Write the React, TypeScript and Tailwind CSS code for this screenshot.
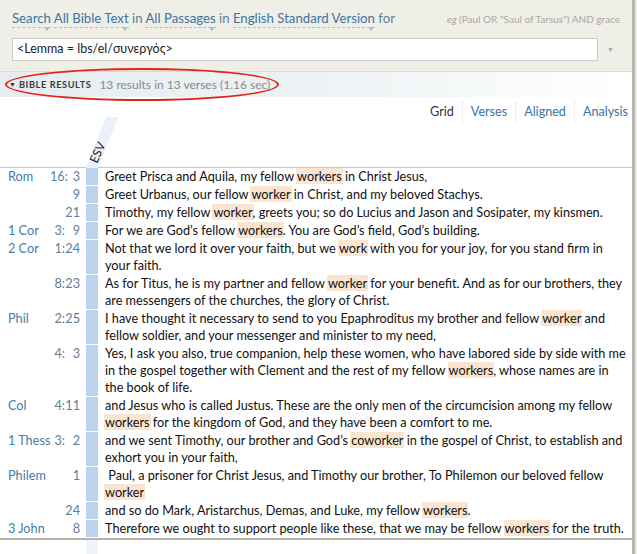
import React from 'react';

type Seg = string | { hit: string };

interface Verse {
  book?: string;
  ch?: string;
  v: string;
  lines: Seg[][];
}

const h = (t: string) => ({ hit: t });

const verses: Verse[] = [
  { book: 'Rom', ch: '16:', v: '3', lines: [['Greet Prisca and Aquila, my fellow ', h('workers'), ' in Christ Jesus,']] },
  { v: '9', lines: [['Greet Urbanus, our fellow ', h('worker'), ' in Christ, and my beloved Stachys.']] },
  { v: '21', lines: [['Timothy, my fellow ', h('worker'), ', greets you; so do Lucius and Jason and Sosipater, my kinsmen.']] },
  { book: '1 Cor', ch: '3:', v: '9', lines: [['For we are God\u2019s fellow ', h('workers'), '. You are God\u2019s field, God\u2019s building.']] },
  {
    book: '2 Cor', ch: '1:', v: '24',
    lines: [['Not that we lord it over your faith, but we ', h('work'), ' with you for your joy, for you stand firm in'], ['your faith.']],
  },
  {
    ch: '8:', v: '23',
    lines: [['As for Titus, he is my partner and fellow ', h('worker'), ' for your benefit. And as for our brothers, they'], ['are messengers of the churches, the glory of Christ.']],
  },
  {
    book: 'Phil', ch: '2:', v: '25',
    lines: [['I have thought it necessary to send to you Epaphroditus my brother and fellow ', h('worker'), ' and'], ['fellow soldier, and your messenger and minister to my need,']],
  },
  {
    ch: '4:', v: '3',
    lines: [
      ['Yes, I ask you also, true companion, help these women, who have labored side by side with me'],
      ['in the gospel together with Clement and the rest of my fellow ', h('workers'), ', whose names are in'],
      ['the book of life.'],
    ],
  },
  {
    book: 'Col', ch: '4:', v: '11',
    lines: [['and Jesus who is called Justus. These are the only men of the circumcision among my fellow'], [h('workers'), ' for the kingdom of God, and they have been a comfort to me.']],
  },
  {
    book: '1 Thess', ch: '3:', v: '2',
    lines: [['and we sent Timothy, our brother and God\u2019s ', h('coworker'), ' in the gospel of Christ, to establish and'], ['exhort you in your faith,']],
  },
  {
    book: 'Philem', v: '1',
    lines: [['\u00a0Paul, a prisoner for Christ Jesus, and Timothy our brother, To Philemon our beloved fellow'], [h('worker')]],
  },
  { v: '24', lines: [['and so do Mark, Aristarchus, Demas, and Luke, my fellow ', h('workers'), '.']] },
  { book: '3 John', v: '8', lines: [['Therefore we ought to support people like these, that we may be fellow ', h('workers'), ' for the truth.']] },
];

const font = { fontFamily: 'Lato, "Noto Sans", sans-serif' };

const DropLink: React.FC<{ children: React.ReactNode }> = ({ children }) => (
  <span className="relative text-[#3d74a3] border-b border-dashed border-[#a9c0d4] pb-[1px]">
    {children}
    <span className="absolute right-[1px] -bottom-[5px] text-[6px] leading-none text-[#8fa9c0]">▼</span>
  </span>
);

const App: React.FC = () => {
  return (
    <div className="w-[637px] h-[554px] flex bg-white overflow-hidden" style={font}>
      <div className="w-[632px] shrink-0 flex flex-col relative">
        {/* search header */}
        <div className="h-[72px] shrink-0 bg-[#efeee7] border-b border-[#dcdbd2] pl-3 pr-[10px] pt-[9px]">
          <div className="flex items-baseline justify-between">
            <div className="text-[13.2px] text-[#5f7f99] whitespace-nowrap">
              <DropLink>Search</DropLink> <DropLink>All Bible Text</DropLink> in{' '}
              <DropLink>All Passages</DropLink> in <DropLink>English Standard Version</DropLink> for
            </div>
            <div className="text-[10px] text-[#a9a8a0] pr-[2px] whitespace-nowrap">
              <span className="italic">eg</span> (Paul OR "Saul of Tarsus") AND grace
            </div>
          </div>
          <div className="mt-[9px] flex items-center">
            <div className="w-[586px] h-[23px] bg-white border border-[#cfcdc4] pl-[4px] flex items-center text-[12.5px] text-[#222]">
              &lt;Lemma = lbs/el/συνεργός&gt;
            </div>
            <span className="ml-[9px] text-[7px] text-[#aaa]">▼</span>
          </div>
        </div>

        {/* results bar */}
        <div className="h-[25px] shrink-0 flex items-center pl-[9px] bg-gradient-to-r from-[#e6edf1] via-[#edf2f4] to-white">
          <span className="text-[7px] text-[#333] mr-[3px]">▼</span>
          <span className="text-[9.2px] font-bold tracking-[0.6px] text-[#3a3a3a]">BIBLE RESULTS</span>
          <span className="ml-[8px] text-[12px] text-[#8a8a88]">13 results in 13 verses (1.16 sec)</span>
        </div>
        <div className="absolute left-[5px] top-[68px] w-[274px] h-[33px] border-2 border-[#e2231a] rounded-[50%] pointer-events-none" />

        {/* view tabs */}
        <div className="h-[71px] shrink-0 relative border-b border-[#c8c8c2]">
          <div className="flex justify-end items-center pt-[4px] pr-[4px] text-[12.6px]">
            <span className="px-[8px] text-[#333]">Grid</span>
            <span className="w-px h-[22px] bg-[#eceff1]" />
            <span className="px-[8px] text-[#3d74a3]">Verses</span>
            <span className="w-px h-[22px] bg-[#eceff1]" />
            <span className="px-[8px] text-[#3d74a3]">Aligned</span>
            <span className="w-px h-[22px] bg-[#eceff1]" />
            <span className="pl-[8px] text-[#3d74a3]">Analysis</span>
          </div>
          <svg className="absolute left-[80px] top-[20px]" width="50" height="51" viewBox="0 0 50 51">
            <polygon points="6,51 18,51 38,0 26,0" fill="#e9f1fa" />
            <text
              x="0"
              y="0"
              fontSize="12"
              fill="#222"
              fontFamily="Lato, sans-serif"
              transform="translate(17 47) rotate(-66)"
            >
              ESV
            </text>
          </svg>
        </div>

        {/* verses */}
        <div className="shrink-0 text-[12.7px] leading-[17px] border-b-2 border-[#b4b4ac]">
          {verses.map((vs, i) => (
            <div key={i} className="flex mb-px">
              <div className="w-[50px] shrink-0 pl-[8px] text-[#4a7aa6] whitespace-nowrap">{vs.book}</div>
              <div className="w-[30px] shrink-0 flex justify-end text-[#5f7f99] whitespace-nowrap">
                <span>{vs.ch}</span>
                <span className="w-[15px] text-right">{vs.v}</span>
              </div>
              <div className="ml-[6px] w-[12px] shrink-0 bg-[#bdd4ee]" />
              <div className="ml-[7px] flex-1 min-w-0 text-[#111]">
                {vs.lines.map((line, j) => (
                  <div key={j} className="whitespace-nowrap">
                    {line.map((seg, k) =>
                      typeof seg === 'string' ? (
                        <span key={k}>{seg}</span>
                      ) : (
                        <span key={k} className="bg-[#fbe5d0] px-[1px] -mx-[1px]">
                          {seg.hit}
                        </span>
                      )
                    )}
                  </div>
                ))}
              </div>
            </div>
          ))}
        </div>
        <div className="flex-1 flex">
          <div className="ml-[86px] w-[12px] bg-[#f0f5fa]" />
        </div>
      </div>
      <div className="w-[3px] shrink-0 bg-[#b7b7af]" />
      <div className="flex-1 bg-[#e9e8e1]" />
    </div>
  );
};

export default App;
